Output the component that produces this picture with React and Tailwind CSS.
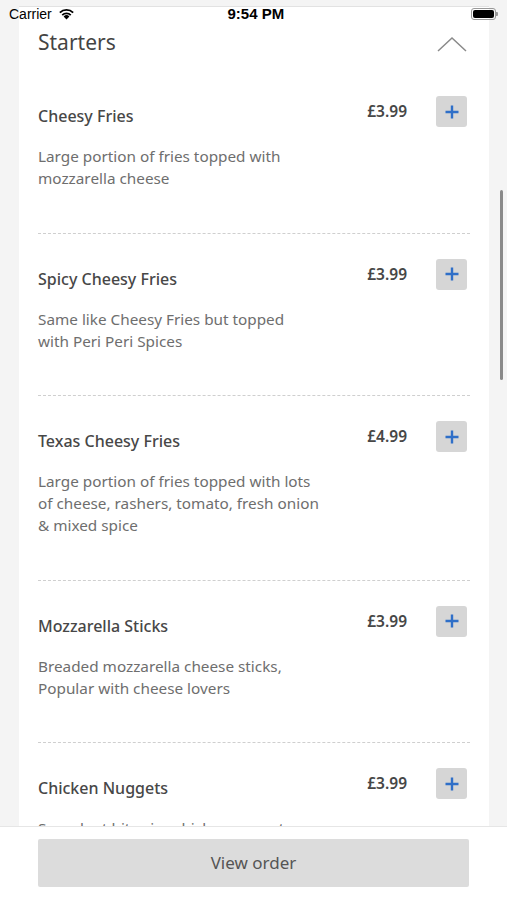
import React from 'react';

const items = [
  { title: 'Cheesy Fries', price: '£3.99', lines: ['Large portion of fries topped with', 'mozzarella cheese'] },
  { title: 'Spicy Cheesy Fries', price: '£3.99', lines: ['Same like Cheesy Fries but topped', 'with Peri Peri Spices'] },
  { title: 'Texas Cheesy Fries', price: '£4.99', lines: ['Large portion of fries topped with lots', 'of cheese, rashers, tomato, fresh onion', '& mixed spice'] },
  { title: 'Mozzarella Sticks', price: '£3.99', lines: ['Breaded mozzarella cheese sticks,', 'Popular with cheese lovers'] },
  { title: 'Chicken Nuggets', price: '£3.99', lines: ['Succulent bite size chicken nuggets'] },
];

const StatusBar = () => (
  <div className="absolute top-0 left-0 right-0 h-[28px] flex items-center px-[9px] font-['Liberation_Sans',sans-serif] text-black">
    <div className="flex items-center gap-[6px] text-[14px]">
      <span>Carrier</span>
      <svg width="17" height="12" viewBox="0 0 17 12">
        <path d="M8.5 11.5 L5.6 8.4 A4.2 4.2 0 0 1 11.4 8.4 Z" fill="#000" />
        <path d="M3.6 6.4 A7 7 0 0 1 13.4 6.4 L12.1 7.7 A5.2 5.2 0 0 0 4.9 7.7 Z" fill="#000" />
        <path d="M1.2 4 A10.4 10.4 0 0 1 15.8 4 L14.5 5.3 A8.6 8.6 0 0 0 2.5 5.3 Z" fill="#000" />
      </svg>
    </div>
    <div className="flex-1 text-center text-[15px] font-semibold pr-[34px]">9:54 PM</div>
    <div className="flex items-center">
      <div className="w-[25px] h-[12px] rounded-[3px] border border-[#999] p-[1px]">
        <div className="w-full h-full rounded-[2px] bg-black" />
      </div>
      <div className="w-[2px] h-[4px] bg-[#999] rounded-r-[1px]" />
    </div>
  </div>
);

const PlusButton = () => (
  <button className="w-[31px] h-[31px] rounded-[3px] bg-[#d6d6d6] flex items-center justify-center">
    <svg width="16" height="16" viewBox="0 0 16 16">
      <path d="M8 1.5 V14.5 M1.5 8 H14.5" stroke="#2f6fc8" strokeWidth="2.4" />
    </svg>
  </button>
);

const MenuItem = ({ item, last }) => (
  <div className={last ? 'pt-[25px]' : 'pt-[25px] pb-[43.5px] border-b border-dashed border-[#cfcfcf]'}>
    <div className="flex items-start">
      <div className="flex-1 mt-[8px] text-[16px] leading-[24px] font-medium text-[#474747]">{item.title}</div>
      <div className="mt-[3px] text-[15.5px] leading-[24px] font-semibold text-[#474747]">{item.price}</div>
      <div className="ml-[29px] mr-[3px]">
        <PlusButton />
      </div>
    </div>
    <div className="mt-[17px] text-[15.3px] leading-[22px] text-[#6e6e6e]">
      {item.lines.map((l) => (
        <div key={l} className="whitespace-nowrap">{l}</div>
      ))}
    </div>
  </div>
);

export default function App() {
  return (
    <div className="relative w-[507px] h-[900px] bg-[#f4f4f4] overflow-hidden flex flex-col font-['Noto_Sans',sans-serif]">
      <div className="flex-1 overflow-hidden pt-[6px]">
        <div className="ml-[19px] w-[470px] bg-white border-t border-[#e2e2e2] px-[19px]">
          <div className="flex items-start justify-between pt-[21px] h-[64px]">
            <div className="text-[21px] leading-[28px] text-[#444]">Starters</div>
            <svg width="30" height="16" viewBox="0 0 30 16" className="mt-[8px] mr-[3px]">
              <path d="M1 15 L15 2 L29 15" fill="none" stroke="#8a8a8a" strokeWidth="1.5" />
            </svg>
          </div>
          {items.map((item, i) => (
            <MenuItem key={item.title} item={item} last={i === items.length - 1} />
          ))}
        </div>
      </div>

      <div className="absolute right-[4px] top-[190px] w-[3px] h-[190px] rounded-full bg-[#8a8a8a]" />

      <div className="h-[74px] bg-white border-t border-[#e6e6e6] px-[38px] pt-[12px] shrink-0">
        <button className="w-full h-[48px] bg-[#dcdcdc] rounded-[2px] text-[17px] text-[#555]">View order</button>
      </div>

      <StatusBar />
    </div>
  );
}
